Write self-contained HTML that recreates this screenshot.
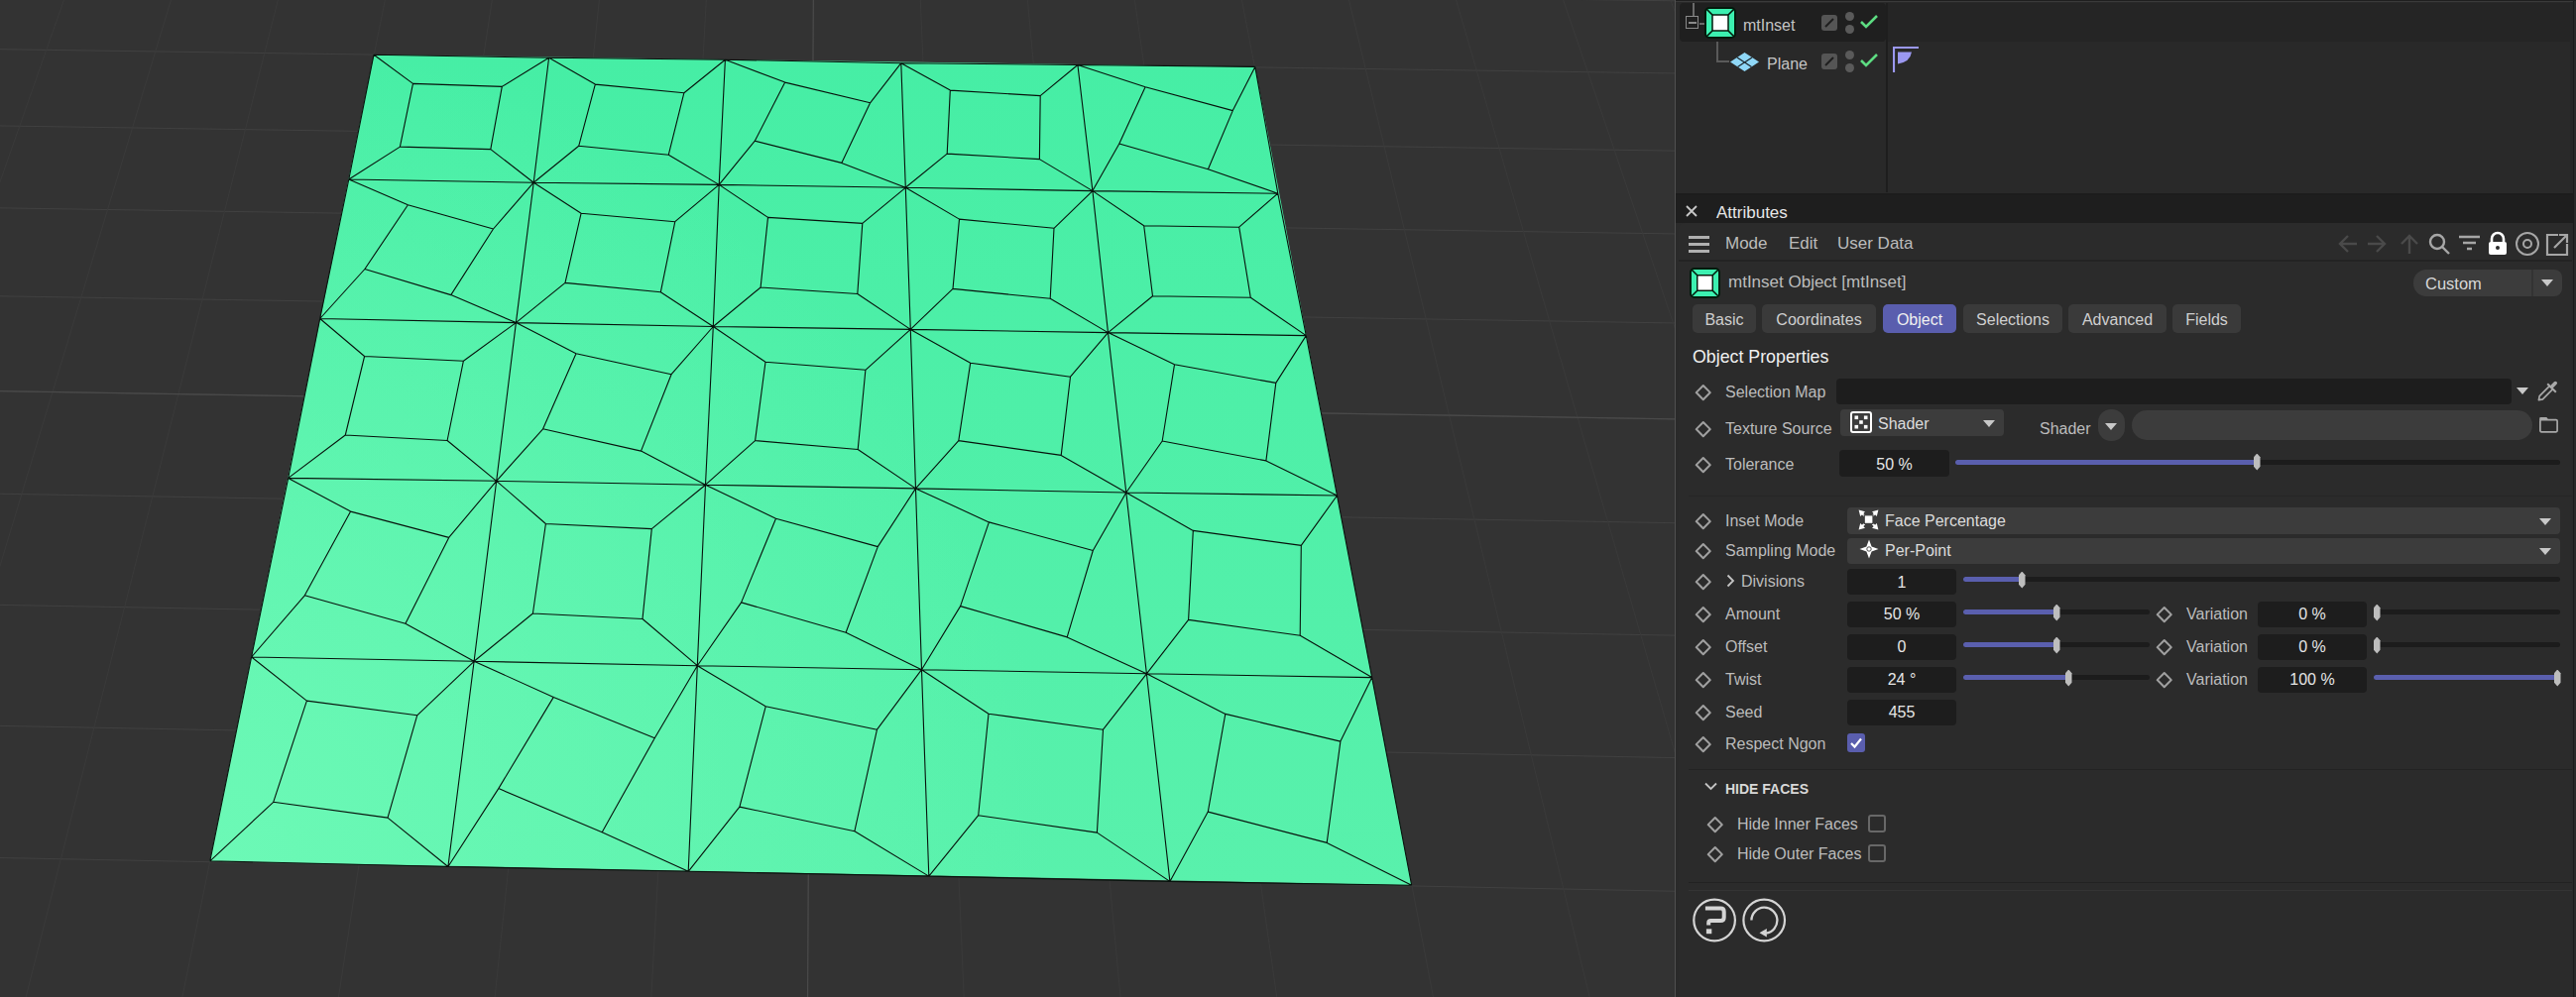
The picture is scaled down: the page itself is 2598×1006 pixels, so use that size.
<!DOCTYPE html>
<html><head><meta charset="utf-8">
<style>
html,body{margin:0;padding:0;width:2598px;height:1006px;overflow:hidden;background:#2a2a2a;}
body{position:relative;font-family:"Liberation Sans",sans-serif;}
.vp{position:absolute;left:0;top:0;}
.a{position:absolute;}
.t{position:absolute;white-space:nowrap;font-size:16px;line-height:20px;height:20px;color:#bcbcbc;margin-top:1px;}
.w{color:#e6e6e6;}
.fld{position:absolute;background:#1d1d1d;border-radius:4px;}
.dd{position:absolute;background:#3c3c3c;border-radius:4px;}
.tab{position:absolute;top:307px;height:29px;background:#3a3a3a;border-radius:5px;color:#cfcfcf;font-size:16px;line-height:31px;text-align:center;}
.dia{position:absolute;width:7.5px;height:7.5px;border:2px solid #a0a0a0;border-radius:1px;transform:rotate(45deg);margin:0.5px 0 0 0.5px;}
.trk{position:absolute;height:5px;background:#1c1c1c;border-radius:3px;}
.fill{position:absolute;height:5px;background:#5a5fae;border-radius:3px;}
.thumb{position:absolute;width:6.5px;height:17px;margin-top:-0.5px;background:#bdbdbd;clip-path:polygon(50% 0,100% 22%,100% 78%,50% 100%,0 78%,0 22%);}
.arr{position:absolute;width:0;height:0;border-left:6px solid transparent;border-right:6px solid transparent;border-top:7px solid #c8c8c8;}
.val{position:absolute;white-space:nowrap;font-size:16px;line-height:20px;color:#e6e6e6;text-align:center;margin-top:1px;}
</style></head>
<body>
<svg class="vp" width="1689" height="1006" viewBox="0 0 1689 1006">
<defs><linearGradient id="gr" x1="0" y1="55" x2="0" y2="893" gradientUnits="userSpaceOnUse"><stop offset="0" stop-color="#46eea5"/><stop offset="1" stop-color="#59f1ac"/></linearGradient>
<radialGradient id="gr2" cx="211" cy="869" r="850" gradientUnits="userSpaceOnUse"><stop offset="0" stop-color="#6cf9b6" stop-opacity="1"/><stop offset="1" stop-color="#6cf9b6" stop-opacity="0"/></radialGradient></defs>
<rect width="1689" height="1006" fill="#333333"/>
<path d="M-4577.8 -472.9L6653.6 -347.9M-4718.7 -428.2L6817.7 -296.1M-4867.3 -381.2L6991.3 -241.2M-5024.0 -331.5L7175.3 -183.1M-5189.5 -279.1L7370.7 -121.4M-5364.7 -223.6L7578.4 -55.8M-5550.4 -164.8L7799.8 14.2M-5747.5 -102.4L8036.2 88.9M-5957.2 -35.9L8289.2 168.8M-6180.7 34.9L8560.6 254.5M-6419.5 110.5L8852.5 346.8M-6675.0 191.5L9167.4 446.2M-6949.3 278.3L9508.0 553.8M-7244.3 371.8L9877.6 670.6M-7562.6 472.6L10280.1 797.7M-7906.9 581.7L10720.1 936.7M-8280.8 700.1L11203.1 1089.3M-8688.0 829.1L11735.7 1257.6M-9133.4 970.2L12325.9 1444.1M-9622.5 1125.1L12983.8 1651.9M-10162.0 1296.0L13721.5 1884.9M-10760.2 1485.5L14554.6 2148.1M-11427.3 1696.8L15502.8 2447.7M-12175.9 1934.0L16591.8 2791.7M-13021.8 2201.9L17855.4 3190.9M-13985.4 2507.1L19339.4 3659.7M-15093.0 2858.0L21106.8 4218.1M-16379.6 3265.6L23247.4 4894.3" stroke="#414141" stroke-width="1" fill="none"/>
<path d="M-393.7 -426.3L-1484.5 1139.1M-307.5 -425.4L-1322.7 1142.7M-221.2 -424.4L-1160.6 1146.2M-134.8 -423.5L-998.2 1149.8M-48.3 -422.5L-835.3 1153.4M38.4 -421.5L-672.1 1157.0M125.1 -420.6L-508.5 1160.6M211.9 -419.6L-344.6 1164.3M298.9 -418.6L-180.3 1167.9M385.9 -417.7L-15.6 1171.5M473.1 -416.7L149.5 1175.2M560.3 -415.7L314.9 1178.8M647.7 -414.7L480.7 1182.5M735.1 -413.8L646.9 1186.2M822.7 -412.8L813.5 1189.8M910.3 -411.8L980.4 1193.5M998.1 -410.8L1147.8 1197.2M1086.0 -409.9L1315.5 1200.9M1174.0 -408.9L1483.6 1204.6M1262.1 -407.9L1652.0 1208.4M1350.3 -406.9L1820.9 1212.1M1438.6 -405.9L1990.2 1215.8M1527.0 -405.0L2159.8 1219.6M1615.5 -404.0L2329.9 1223.3M1704.1 -403.0L2500.3 1227.1M1792.9 -402.0L2671.1 1230.9M1881.7 -401.0L2842.3 1234.6M1970.6 -400.0L3013.9 1238.4M2059.7 -399.0L3186.0 1242.2M2148.8 -398.0L3358.4 1246.0M2238.1 -397.1L3531.2 1249.8M2327.5 -396.1L3704.4 1253.7M2417.0 -395.1L3878.0 1257.5M2506.6 -394.1L4052.0 1261.4" stroke="#3a3a3a" stroke-width="1" fill="none"/>
<path d="M-6949.3 278.3L9508.0 553.8M822.7 -412.8L813.5 1189.8" stroke="#4a4a4a" stroke-width="1.2" fill="none"/>
<polygon points="377.0,55.2 1265.8,67.4 1423.7,893.3 211.8,868.8" fill="url(#gr)"/>
<polygon points="377.0,55.2 1265.8,67.4 1423.7,893.3 211.8,868.8" fill="url(#gr2)"/>
<path d="M377.0 55.2L553.6 58.2L731.4 60.2L908.8 63.7L1086.9 65.5L1265.8 67.4M351.8 181.0L538.2 184.2L725.2 186.4L913.3 189.3L1101.9 192.6L1288.8 195.2M322.7 321.5L520.4 325.6L719.3 329.5L918.3 332.4L1117.5 335.6L1317.3 338.6M290.7 482.4L500.7 485.3L711.5 489.2L923.5 492.9L1135.8 497.0L1348.5 500.0M253.6 663.0L478.1 667.3L703.3 671.7L929.5 675.7L1156.4 679.8L1383.7 683.6M211.8 868.8L451.9 874.5L694.2 879.3L936.8 884.1L1179.9 889.4L1423.7 893.3M377.0 55.2L351.8 181.0L322.7 321.5L290.7 482.4L253.6 663.0L211.8 868.8M553.6 58.2L538.2 184.2L520.4 325.6L500.7 485.3L478.1 667.3L451.9 874.5M731.4 60.2L725.2 186.4L719.3 329.5L711.5 489.2L703.3 671.7L694.2 879.3M908.8 63.7L913.3 189.3L918.3 332.4L923.5 492.9L929.5 675.7L936.8 884.1M1086.9 65.5L1101.9 192.6L1117.5 335.6L1135.8 497.0L1156.4 679.8L1179.9 889.4M1265.8 67.4L1288.8 195.2L1317.3 338.6L1348.5 500.0L1383.7 683.6L1423.7 893.3M416.5 84.4L506.3 87.4L494.8 150.6L403.4 148.1ZM377.0 55.2L416.5 84.4M553.6 58.2L506.3 87.4M538.2 184.2L494.8 150.6M351.8 181.0L403.4 148.1M600.3 85.1L689.9 93.7L674.3 156.2L583.7 147.3ZM553.6 58.2L600.3 85.1M731.4 60.2L689.9 93.7M725.2 186.4L674.3 156.2M538.2 184.2L583.7 147.3M791.7 83.1L877.6 103.8L848.8 164.4L761.3 142.2ZM731.4 60.2L791.7 83.1M908.8 63.7L877.6 103.8M913.3 189.3L848.8 164.4M725.2 186.4L761.3 142.2M958.3 91.1L1049.2 96.6L1048.4 160.6L955.2 155.1ZM908.8 63.7L958.3 91.1M1086.9 65.5L1049.2 96.6M1101.9 192.6L1048.4 160.6M913.3 189.3L955.2 155.1M1155.1 87.7L1243.3 111.6L1218.4 170.8L1128.8 145.0ZM1086.9 65.5L1155.1 87.7M1265.8 67.4L1243.3 111.6M1288.8 195.2L1218.4 170.8M1101.9 192.6L1128.8 145.0M411.4 206.7L497.5 231.0L454.8 297.6L367.9 271.5ZM351.8 181.0L411.4 206.7M538.2 184.2L497.5 231.0M520.4 325.6L454.8 297.6M322.7 321.5L367.9 271.5M586.1 215.2L680.8 223.7L666.3 294.8L570.0 285.4ZM538.2 184.2L586.1 215.2M725.2 186.4L680.8 223.7M719.3 329.5L666.3 294.8M520.4 325.6L570.0 285.4M774.5 219.4L869.8 225.4L864.8 296.5L767.1 290.0ZM725.2 186.4L774.5 219.4M913.3 189.3L869.8 225.4M918.3 332.4L864.8 296.5M719.3 329.5L767.1 290.0M967.5 221.1L1063.0 230.3L1059.2 301.3L961.0 291.4ZM913.3 189.3L967.5 221.1M1101.9 192.6L1063.0 230.3M1117.5 335.6L1059.2 301.3M918.3 332.4L961.0 291.4M1153.7 227.7L1249.7 229.2L1261.3 300.3L1162.5 298.8ZM1101.9 192.6L1153.7 227.7M1288.8 195.2L1249.7 229.2M1317.3 338.6L1261.3 300.3M1117.5 335.6L1162.5 298.8M367.6 359.5L467.4 364.2L451.1 444.5L348.3 439.0ZM322.7 321.5L367.6 359.5M520.4 325.6L467.4 364.2M500.7 485.3L451.1 444.5M290.7 482.4L348.3 439.0M581.0 356.8L677.1 377.7L646.5 455.1L547.6 432.8ZM520.4 325.6L581.0 356.8M719.3 329.5L677.1 377.7M711.5 489.2L646.5 455.1M500.7 485.3L547.6 432.8M772.0 365.3L872.9 373.3L865.2 453.5L761.6 444.6ZM719.3 329.5L772.0 365.3M918.3 332.4L872.9 373.3M923.5 492.9L865.2 453.5M711.5 489.2L761.6 444.6M978.7 366.2L1079.5 380.2L1070.2 459.4L966.8 444.6ZM918.3 332.4L978.7 366.2M1117.5 335.6L1079.5 380.2M1135.8 497.0L1070.2 459.4M923.5 492.9L966.8 444.6M1184.5 367.8L1286.8 386.4L1276.9 464.9L1172.2 445.0ZM1117.5 335.6L1184.5 367.8M1317.3 338.6L1286.8 386.4M1348.5 500.0L1276.9 464.9M1135.8 497.0L1172.2 445.0M353.6 516.1L452.7 542.4L408.9 629.2L307.3 600.8ZM290.7 482.4L353.6 516.1M500.7 485.3L452.7 542.4M478.1 667.3L408.9 629.2M253.6 663.0L307.3 600.8M550.4 528.5L657.3 533.6L648.0 624.5L537.4 619.0ZM500.7 485.3L550.4 528.5M711.5 489.2L657.3 533.6M703.3 671.7L648.0 624.5M478.1 667.3L537.4 619.0M782.5 523.2L885.3 551.6L853.1 638.3L747.6 607.9ZM711.5 489.2L782.5 523.2M923.5 492.9L885.3 551.6M929.5 675.7L853.1 638.3M703.3 671.7L747.6 607.9M997.4 526.9L1102.3 555.5L1076.2 642.9L968.6 611.6ZM923.5 492.9L997.4 526.9M1135.8 497.0L1102.3 555.5M1156.4 679.8L1076.2 642.9M929.5 675.7L968.6 611.6M1203.3 535.4L1312.3 550.4L1311.2 641.3L1198.6 625.4ZM1135.8 497.0L1203.3 535.4M1348.5 500.0L1312.3 550.4M1383.7 683.6L1311.2 641.3M1156.4 679.8L1198.6 625.4M309.4 707.1L420.7 721.8L391.0 825.1L275.7 809.3ZM253.6 663.0L309.4 707.1M478.1 667.3L420.7 721.8M451.9 874.5L391.0 825.1M211.8 868.8L275.7 809.3M558.3 703.4L660.3 744.7L607.2 839.8L502.8 795.6ZM478.1 667.3L558.3 703.4M703.3 671.7L660.3 744.7M694.2 879.3L607.2 839.8M451.9 874.5L502.8 795.6M772.2 712.8L884.5 736.2L861.9 838.7L745.9 814.1ZM703.3 671.7L772.2 712.8M929.5 675.7L884.5 736.2M936.8 884.1L861.9 838.7M694.2 879.3L745.9 814.1M997.0 720.2L1112.5 736.2L1106.4 840.1L986.7 822.7ZM929.5 675.7L997.0 720.2M1156.4 679.8L1112.5 736.2M1179.9 889.4L1106.4 840.1M936.8 884.1L986.7 822.7M1235.8 720.4L1351.9 748.1L1338.2 850.4L1218.3 819.1ZM1156.4 679.8L1235.8 720.4M1383.7 683.6L1351.9 748.1M1423.7 893.3L1338.2 850.4M1179.9 889.4L1218.3 819.1" stroke="#07120c" stroke-width="1.1" fill="none" stroke-linejoin="round"/>
</svg>
<!-- panel separator -->
<div class="a" style="left:1688.8px;top:0;width:1.5px;height:1006px;background:#505050"></div>
<!-- object manager -->
<div class="a" style="left:1690px;top:0;width:908px;height:197px;background:#292929"></div>
<div class="a" style="left:1903px;top:3px;width:689px;height:39px;background:#252525"></div>
<div class="a" style="left:2592px;top:0;width:3px;height:197px;background:#272727"></div>
<div class="a" style="left:1690px;top:195px;width:908px;height:2px;background:#1c1c1c"></div>
<div class="a" style="left:1690px;top:1px;width:908px;height:1px;background:#3a3a3a"></div>
<div class="a" style="left:1694px;top:3px;width:208px;height:39px;background:#1f1f1f;border-radius:4px"></div>

<!-- tree lines -->
<div class="a" style="left:1707px;top:3px;width:2px;height:13px;background:#6b6b6b"></div>
<div class="a" style="left:1700px;top:16px;width:11px;height:11px;border:1.5px solid #8a8a8a"></div>
<div class="a" style="left:1703px;top:22px;width:8px;height:2px;background:#8a8a8a"></div>
<div class="a" style="left:1714px;top:23px;width:6px;height:1.5px;background:#6b6b6b"></div>
<div class="a" style="left:1731px;top:42px;width:1.5px;height:20px;background:#5a5a5a"></div>
<div class="a" style="left:1731px;top:61px;width:13px;height:1.5px;background:#5a5a5a"></div>
<!-- mtInset icon -->
<svg class="a" style="left:1719px;top:7px" width="32" height="32" viewBox="0 0 32 32">
<rect x="1" y="1" width="30" height="30" rx="4" fill="#3cf0b0" stroke="#031a0c" stroke-width="2"/>
<rect x="8" y="8" width="16" height="16" fill="#ffffff" stroke="#031a0c" stroke-width="1.5"/>
<path d="M2 2L8 8M30 2L24 8M30 30L24 24M2 30L8 24" stroke="#031a0c" stroke-width="1.6"/>
</svg>
<div class="t" style="left:1758px;top:15px;font-size:16px;color:#c4c4c4">mtInset</div>
<!-- edit icons -->
<svg class="a" style="left:1837px;top:15px" width="16" height="16" viewBox="0 0 16 16"><rect x="0" y="0" width="16" height="16" rx="3" fill="#555"/><path d="M4 12L12 4" stroke="#1e1e1e" stroke-width="2"/></svg>
<div class="a" style="left:1861px;top:12px;width:9px;height:9px;border-radius:50%;background:#5a5a5a"></div>
<div class="a" style="left:1861px;top:25px;width:9px;height:9px;border-radius:50%;background:#5a5a5a"></div>
<svg class="a" style="left:1875px;top:14px" width="20" height="16" viewBox="0 0 20 16"><path d="M2 8L7 13L18 2" stroke="#5ddc82" stroke-width="2.6" fill="none"/></svg>
<!-- plane row -->
<svg class="a" style="left:1745px;top:53px" width="29" height="19" viewBox="0 0 29 19">
<path d="M14.5 0L29 9.5L14.5 19L0 9.5Z" fill="#8fd7f7"/>
<path d="M7 5L21.5 14.5M22 5L7.5 14.5" stroke="#1f2a30" stroke-width="1.4"/>
</svg>
<div class="t" style="left:1782px;top:54px;font-size:16px;color:#c4c4c4">Plane</div>
<svg class="a" style="left:1837px;top:54px" width="16" height="16" viewBox="0 0 16 16"><rect x="0" y="0" width="16" height="16" rx="3" fill="#555"/><path d="M4 12L12 4" stroke="#1e1e1e" stroke-width="2"/></svg>
<div class="a" style="left:1861px;top:51px;width:9px;height:9px;border-radius:50%;background:#5a5a5a"></div>
<div class="a" style="left:1861px;top:64px;width:9px;height:9px;border-radius:50%;background:#5a5a5a"></div>
<svg class="a" style="left:1875px;top:53px" width="20" height="16" viewBox="0 0 20 16"><path d="M2 8L7 13L18 2" stroke="#5ddc82" stroke-width="2.6" fill="none"/></svg>
<svg class="a" style="left:1909px;top:47px" width="27" height="26" viewBox="0 0 27 26"><path d="M1 26V1H26" stroke="#9b98f0" stroke-width="2.2" fill="none"/><path d="M5 5.5H19Q17.5 15.5 5 17.5Z" fill="#9b98f0"/></svg>

<div class="a" style="left:1902px;top:3px;width:2px;height:191px;background:#1e1e1e"></div>
<!-- attributes header -->
<div class="a" style="left:1690px;top:197px;width:908px;height:28px;background:#1e1e1e"></div>
<svg class="a" style="left:1700px;top:207px" width="12" height="12" viewBox="0 0 12 12"><path d="M1 1L11 11M11 1L1 11" stroke="#c8c8c8" stroke-width="1.8"/></svg>
<div class="t w" style="left:1731px;top:203.5px;font-size:17px">Attributes</div>
<!-- attributes body -->
<div class="a" style="left:1693px;top:225px;width:901px;height:781px;background:#2b2b2b;border-radius:6px 0 0 0"></div>
<div class="a" style="left:1693px;top:262px;width:901px;height:2px;background:#232323"></div>
<div class="a" style="left:2594px;top:225px;width:1px;height:781px;background:#2a2a2a"></div>
<!-- toolbar -->
<div class="a" style="left:1703px;top:238px;width:21px;height:3px;background:#b0b0b0"></div>
<div class="a" style="left:1703px;top:245px;width:21px;height:3px;background:#b0b0b0"></div>
<div class="a" style="left:1703px;top:252px;width:21px;height:3px;background:#b0b0b0"></div>
<div class="t" style="left:1740px;top:234.5px;font-size:17px">Mode</div>
<div class="t" style="left:1804px;top:234.5px;font-size:17px">Edit</div>
<div class="t" style="left:1853px;top:234.5px;font-size:17px">User Data</div>
<svg class="a" style="left:2355px;top:233px" width="240" height="26" viewBox="0 0 240 26">
<g stroke="#4a4a4a" stroke-width="2.4" fill="none"><path d="M6 13H22M13 5L5 13L13 21"/><path d="M33 13H50M42 5L50 13L42 21"/><path d="M75 23V6M67 13L75 5L83 13"/></g>
<g stroke="#a6a6a6" stroke-width="2.4" fill="none"><circle cx="103" cy="11" r="7"/><path d="M108 16L115 23"/><path d="M125 6H146M129 12H142M133 18H138"/></g>
<path d="M158 11V8A6 6 0 0 1 170 8V11" stroke="#fff" stroke-width="2.6" fill="none"/><rect x="155" y="11" width="18" height="13" rx="2" fill="#fff"/><circle cx="164" cy="17" r="2" fill="#2b2b2b"/>
<circle cx="194" cy="13" r="11" stroke="#a6a6a6" stroke-width="2" fill="none"/><circle cx="194" cy="13" r="4" stroke="#a6a6a6" stroke-width="2" fill="none"/>
<path d="M225 4H214V24H234V13M221 17L234 4M226 4H234V12" stroke="#a6a6a6" stroke-width="2.2" fill="none"/>
</svg>
<!-- object row -->
<svg class="a" style="left:1704px;top:270px" width="31" height="31" viewBox="0 0 32 32">
<rect x="1" y="1" width="30" height="30" rx="4" fill="#3cf0b0" stroke="#031a0c" stroke-width="2"/>
<rect x="8" y="8" width="16" height="16" fill="#ffffff" stroke="#031a0c" stroke-width="1.5"/>
<path d="M2 2L8 8M30 2L24 8M30 30L24 24M2 30L8 24" stroke="#031a0c" stroke-width="1.6"/>
</svg>
<div class="t" style="left:1743px;top:274px;font-size:17px">mtInset Object [mtInset]</div>
<div class="dd" style="left:2434px;top:272px;width:150px;height:27px;border-radius:13px 8px 8px 13px"></div>
<div class="a" style="left:2553px;top:272px;width:2px;height:27px;background:#333"></div>
<div class="t" style="left:2446px;top:274.5px;font-size:16.5px;color:#d8d8d8">Custom</div>
<div class="arr" style="left:2563px;top:282px"></div>
<!-- tabs -->
<div class="tab" style="left:1707px;width:64px">Basic</div>
<div class="tab" style="left:1777px;width:115px">Coordinates</div>
<div class="tab" style="left:1899px;width:74px;background:#5a5eae;color:#f0f0f0">Object</div>
<div class="tab" style="left:1980px;width:100px">Selections</div>
<div class="tab" style="left:2086px;width:99px">Advanced</div>
<div class="tab" style="left:2191px;width:69px">Fields</div>

<div class="t w" style="left:1707px;top:348.5px;font-size:17.8px;color:#f0f0f0">Object Properties</div>
<!-- Selection map -->
<div class="dia" style="left:1711px;top:389px"></div>
<div class="t" style="left:1740px;top:385px">Selection Map</div>
<div class="fld" style="left:1852px;top:382px;width:681px;height:26px"></div>
<div class="arr" style="left:2538px;top:391px"></div>
<svg class="a" style="left:2558px;top:383px" width="22" height="22" viewBox="0 0 22 22"><path d="M2.4 20.6L3.2 16.6L13.4 6.4L16.6 9.6L6.4 19.8Z" stroke="#a8a8a8" stroke-width="1.7" fill="none" stroke-linejoin="round"/><path d="M11.2 4.2L19.8 12.8" stroke="#a8a8a8" stroke-width="2"/><path d="M16 6.8L19.2 3.6" stroke="#a8a8a8" stroke-width="3.6" stroke-linecap="round"/></svg>
<!-- Texture source -->
<div class="dia" style="left:1711px;top:426px"></div>
<div class="t" style="left:1740px;top:422px">Texture Source</div>
<div class="dd" style="left:1856px;top:413px;width:165px;height:27px"></div>
<svg class="a" style="left:1866px;top:415px" width="22" height="22" viewBox="0 0 22 22"><rect x="1" y="1" width="20" height="20" rx="2" fill="none" stroke="#fff" stroke-width="2"/><rect x="4.5" y="4.5" width="3.6" height="3.6" fill="#fff"/><rect x="13.9" y="4.5" width="3.6" height="3.6" fill="#fff"/><rect x="9.2" y="9.2" width="3.6" height="3.6" fill="#fff"/><rect x="4.5" y="13.9" width="3.6" height="3.6" fill="#fff"/><rect x="13.9" y="13.9" width="3.6" height="3.6" fill="#fff"/></svg>
<div class="t" style="left:1894px;top:417px;color:#dcdcdc">Shader</div>
<div class="arr" style="left:2000px;top:424px"></div>
<div class="t" style="left:2057px;top:422px">Shader</div>
<div class="dd" style="left:2116px;top:413px;width:27px;height:32px;border-radius:13px"></div>
<div class="arr" style="left:2123px;top:427px"></div>
<div class="dd" style="left:2150px;top:414px;width:404px;height:30px;border-radius:15px"></div>
<svg class="a" style="left:2560px;top:419px" width="21" height="19" viewBox="0 0 21 19"><rect x="1.9" y="4.6" width="17.2" height="12.2" rx="1.2" stroke="#a8a8a8" stroke-width="1.7" fill="none"/><path d="M1.2 5V3Q1.2 1.9 2.3 1.9H8.4L10 4.2Z" fill="#a8a8a8"/></svg>
<!-- Tolerance -->
<div class="dia" style="left:1711px;top:462px"></div>
<div class="t" style="left:1740px;top:458px">Tolerance</div>
<div class="fld" style="left:1855px;top:454px;width:111px;height:27px"></div>
<div class="val" style="left:1855px;top:458px;width:111px">50 %</div>
<div class="trk" style="left:1972px;top:464px;width:610px"></div>
<div class="fill" style="left:1972px;top:464px;width:304px"></div>
<div class="thumb" style="left:2273px;top:458px"></div>
<!-- separator -->
<div class="a" style="left:1703px;top:500px;width:891px;height:1px;background:#262626"></div>
<!-- Inset Mode -->
<div class="dia" style="left:1711px;top:519px"></div>
<div class="t" style="left:1740px;top:515px">Inset Mode</div>
<div class="dd" style="left:1863px;top:512px;width:719px;height:27px"></div>
<svg class="a" style="left:1874px;top:514px" width="21" height="21" viewBox="0 0 21 21"><path d="M3 3L6.5 6.5M18 3L14.5 6.5M18 18L14.5 14.5M3 18L6.5 14.5" stroke="#fff" stroke-width="1.8"/><path d="M0.6 0.6L7 2.2L2.2 7Z M20.4 0.6L14 2.2L18.8 7Z M20.4 20.4L14 18.8L18.8 14Z M0.6 20.4L7 18.8L2.2 14Z" fill="#fff"/><rect x="6.2" y="5.8" width="8.8" height="8.6" fill="#fff" stroke="#3c3c3c" stroke-width="1.2"/></svg>
<div class="t" style="left:1901px;top:515px;color:#dcdcdc">Face Percentage</div>
<div class="arr" style="left:2561px;top:523px"></div>
<!-- Sampling Mode -->
<div class="dia" style="left:1711px;top:549px"></div>
<div class="t" style="left:1740px;top:545px">Sampling Mode</div>
<div class="dd" style="left:1863px;top:543px;width:719px;height:26px"></div>
<svg class="a" style="left:1875px;top:544px" width="20" height="20" viewBox="0 0 20 20"><path d="M10 0.5L12.6 7.4L19.5 10L12.6 12.6L10 19.5L7.4 12.6L0.5 10L7.4 7.4Z" fill="#fff"/><circle cx="10" cy="10" r="2.2" fill="none" stroke="#3c3c3c" stroke-width="0.9"/></svg>
<div class="t" style="left:1901px;top:545px;color:#dcdcdc">Per-Point</div>
<div class="arr" style="left:2561px;top:553px"></div>
<!-- Divisions -->
<div class="dia" style="left:1711px;top:580px"></div>
<svg class="a" style="left:1741px;top:579px" width="9" height="14" viewBox="0 0 9 14"><path d="M1.5 1.5L7 7L1.5 12.5" stroke="#c4c4c4" stroke-width="1.8" fill="none"/></svg>
<div class="t" style="left:1756px;top:576px">Divisions</div>
<div class="fld" style="left:1863px;top:574px;width:110px;height:26px"></div>
<div class="val" style="left:1863px;top:577px;width:110px">1</div>
<div class="trk" style="left:1980px;top:582px;width:602px"></div>
<div class="fill" style="left:1980px;top:582px;width:60px"></div>
<div class="thumb" style="left:2036px;top:577px"></div>
<!-- Amount -->
<div class="dia" style="left:1711px;top:613px"></div>
<div class="t" style="left:1740px;top:609px">Amount</div>
<div class="fld" style="left:1863px;top:607px;width:110px;height:26px"></div>
<div class="val" style="left:1863px;top:609px;width:110px">50 %</div>
<div class="trk" style="left:1980px;top:615px;width:188px"></div>
<div class="fill" style="left:1980px;top:615px;width:94px"></div>
<div class="thumb" style="left:2071px;top:610px"></div>
<div class="dia" style="left:2176px;top:613px"></div>
<div class="t" style="left:2205px;top:609px">Variation</div>
<div class="fld" style="left:2277px;top:607px;width:110px;height:26px"></div>
<div class="val" style="left:2277px;top:609px;width:110px">0 %</div>
<div class="trk" style="left:2394px;top:615px;width:188px"></div>
<div class="thumb" style="left:2394px;top:610px"></div>
<!-- Offset -->
<div class="dia" style="left:1711px;top:646px"></div>
<div class="t" style="left:1740px;top:642px">Offset</div>
<div class="fld" style="left:1863px;top:640px;width:110px;height:26px"></div>
<div class="val" style="left:1863px;top:642px;width:110px">0</div>
<div class="trk" style="left:1980px;top:648px;width:188px"></div>
<div class="fill" style="left:1980px;top:648px;width:94px"></div>
<div class="thumb" style="left:2071px;top:643px"></div>
<div class="dia" style="left:2176px;top:646px"></div>
<div class="t" style="left:2205px;top:642px">Variation</div>
<div class="fld" style="left:2277px;top:640px;width:110px;height:26px"></div>
<div class="val" style="left:2277px;top:642px;width:110px">0 %</div>
<div class="trk" style="left:2394px;top:648px;width:188px"></div>
<div class="thumb" style="left:2394px;top:643px"></div>
<!-- Twist -->
<div class="dia" style="left:1711px;top:679px"></div>
<div class="t" style="left:1740px;top:675px">Twist</div>
<div class="fld" style="left:1863px;top:673px;width:110px;height:26px"></div>
<div class="val" style="left:1863px;top:675px;width:110px">24 °</div>
<div class="trk" style="left:1980px;top:681px;width:188px"></div>
<div class="fill" style="left:1980px;top:681px;width:106px"></div>
<div class="thumb" style="left:2083px;top:676px"></div>
<div class="dia" style="left:2176px;top:679px"></div>
<div class="t" style="left:2205px;top:675px">Variation</div>
<div class="fld" style="left:2277px;top:673px;width:110px;height:26px"></div>
<div class="val" style="left:2277px;top:675px;width:110px">100 %</div>
<div class="trk" style="left:2394px;top:681px;width:188px"></div>
<div class="fill" style="left:2394px;top:681px;width:186px"></div>
<div class="thumb" style="left:2576px;top:676px"></div>
<!-- Seed -->
<div class="dia" style="left:1711px;top:712px"></div>
<div class="t" style="left:1740px;top:708px">Seed</div>
<div class="fld" style="left:1863px;top:706px;width:110px;height:26px"></div>
<div class="val" style="left:1863px;top:708px;width:110px">455</div>
<!-- Respect Ngon -->
<div class="dia" style="left:1711px;top:744px"></div>
<div class="t" style="left:1740px;top:740px">Respect Ngon</div>
<svg class="a" style="left:1863px;top:740px" width="18" height="19" viewBox="0 0 18 19"><rect x="0" y="0" width="18" height="19" rx="3" fill="#5a5eae"/><path d="M4 10L7.5 13.5L14 5.5" stroke="#fff" stroke-width="2.2" fill="none"/></svg>
<!-- Hide faces -->
<div class="a" style="left:1703px;top:776px;width:891px;height:1px;background:#232323"></div>
<svg class="a" style="left:1719px;top:789px" width="13" height="9" viewBox="0 0 13 9"><path d="M1 1.5L6.5 7L12 1.5" stroke="#c4c4c4" stroke-width="1.8" fill="none"/></svg>
<div class="t" style="left:1740px;top:785px;font-size:14px;font-weight:bold;color:#d8d8d8">HIDE FACES</div>
<div class="dia" style="left:1723px;top:825px"></div>
<div class="t" style="left:1752px;top:821px">Hide Inner Faces</div>
<div class="a" style="left:1884px;top:822px;width:14px;height:14px;border:2.4px solid #686868;border-radius:3px"></div>
<div class="dia" style="left:1723px;top:855px"></div>
<div class="t" style="left:1752px;top:851px">Hide Outer Faces</div>
<div class="a" style="left:1884px;top:852px;width:14px;height:14px;border:2.4px solid #686868;border-radius:3px"></div>
<div class="a" style="left:1703px;top:890px;width:891px;height:1px;background:#222"></div>
<div class="a" style="left:1703px;top:898px;width:891px;height:1px;background:#343434"></div>
<!-- bottom icons -->
<svg class="a" style="left:1706px;top:906px" width="46" height="46" viewBox="0 0 46 46"><circle cx="23.1" cy="22.5" r="20.8" stroke="#d4d4d4" stroke-width="2.2" fill="none"/><path d="M13.9 10.6H29.3Q32.7 10.6 32.7 14V19.7Q32.7 23.1 29.3 23.1H19.4Q17.2 23.1 17.2 25.3V27.6" stroke="#d4d4d4" stroke-width="4" fill="none"/><rect x="14.9" y="31.3" width="5.4" height="4.9" fill="#d4d4d4"/></svg>
<svg class="a" style="left:1756px;top:906px" width="46" height="46" viewBox="0 0 46 46"><circle cx="23.2" cy="22.5" r="20.8" stroke="#d4d4d4" stroke-width="2.2" fill="none"/><path d="M10.4 22.5A13 13 0 1 1 25 35.6" stroke="#d4d4d4" stroke-width="2.3" fill="none"/><path d="M18.5 35.3L25.8 31V39.4Z" fill="#d4d4d4"/></svg>
<div class="a" style="left:2595px;top:0;width:1px;height:1006px;background:#1c1c1c"></div>
<div class="a" style="left:2596px;top:0;width:2px;height:1006px;background:#2a2a2a"></div>
<div class="a" style="left:1690px;top:0;width:908px;height:1px;background:#1f1f1f"></div>
</body></html>
